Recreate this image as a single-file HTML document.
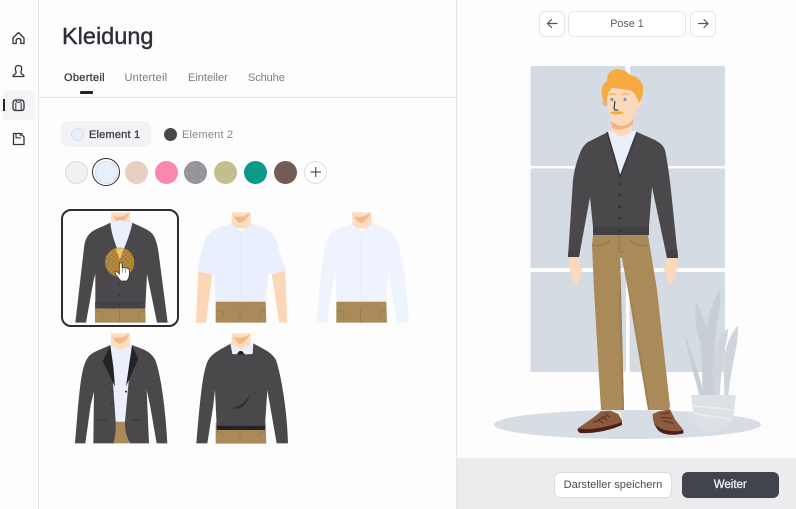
<!DOCTYPE html>
<html lang="de"><head><meta charset="utf-8"><title>Kleidung</title>
<style>
html,body{margin:0;padding:0;width:796px;height:509px;overflow:hidden;background:#fdfdfe;font-family:"Liberation Sans",sans-serif}
body{filter:blur(.3px)}
.a{position:absolute;white-space:nowrap}
.sw{position:absolute;width:23px;height:23px;border-radius:50%;top:160.5px;box-sizing:border-box}
.btn{position:absolute;box-sizing:border-box;border:1.5px solid #e6e7ea;border-radius:6px;background:#fff;text-align:center;color:#5b5c62;font-size:10.8px;line-height:25px}
.tab{position:absolute;top:71px;font-size:11px;line-height:14px;color:#797a80;letter-spacing:.2px;white-space:nowrap}
svg{position:absolute;left:0;top:0}
</style></head><body>
<div class="a" style="left:38px;top:0;width:1px;height:509px;background:#e6e6e9"></div>
<div class="a" style="left:456px;top:0;width:1px;height:509px;background:#e6e6e9"></div>
<div class="a" style="left:39px;top:97px;width:417px;height:1px;background:#e6e6e9"></div>
<div class="a" style="left:3px;top:91px;width:32px;height:29px;border-radius:4px;background:#f4f4f6"></div>
<div class="a" style="left:3px;top:99px;width:2px;height:12px;background:#26272c"></div>
<div class="a" style="left:62px;top:20.5px;font-size:23.5px;line-height:30px;color:#2c2e35;-webkit-text-stroke:.4px #2c2e35">Kleidung</div>
<div class="tab" style="left:64px;color:#3a3b41;-webkit-text-stroke:.3px #3a3b41;letter-spacing:.3px">Oberteil</div>
<div class="tab" style="left:124.5px">Unterteil</div>
<div class="tab" style="left:188px;letter-spacing:0">Einteiler</div>
<div class="tab" style="left:248px;letter-spacing:-.1px">Schuhe</div>
<div class="a" style="left:80px;top:91px;width:13px;height:2.5px;border-radius:1px;background:#23242a"></div>
<div class="a" style="left:61px;top:121px;width:90px;height:26px;border-radius:7px;background:#f3f3f6"></div>
<div class="a" style="left:70.5px;top:127.5px;width:13px;height:13px;border-radius:50%;background:#e8effc;border:1px solid #d8dce6;box-sizing:border-box"></div>
<div class="a" style="left:89px;top:127.5px;font-size:11px;line-height:14px;color:#3e3f45;-webkit-text-stroke:.35px #3e3f45;letter-spacing:.2px">Element 1</div>
<div class="a" style="left:163.5px;top:127.5px;width:13px;height:13px;border-radius:50%;background:#49474b"></div>
<div class="a" style="left:182px;top:127.5px;font-size:11px;line-height:14px;color:#85868c;letter-spacing:.2px">Element 2</div>
<div class="sw" style="left:64.5px;background:#f1f1f3;border:1px solid #dcdcdf"></div>
<div class="a" style="left:92px;top:158px;width:28px;height:28px;border-radius:50%;border:1.5px solid #2c2d31;box-sizing:border-box;background:#fff"></div>
<div class="sw" style="left:94.5px;background:#e8effc;border:1px solid #d6dbe6"></div>
<div class="sw" style="left:124.5px;background:#e6cfc2"></div>
<div class="sw" style="left:154.5px;background:#fb87b0"></div>
<div class="sw" style="left:184px;background:#94949c"></div>
<div class="sw" style="left:214px;background:#c4bf8f"></div>
<div class="sw" style="left:244px;background:#0a9a8c"></div>
<div class="sw" style="left:274px;background:#745b58"></div>
<div class="sw" style="left:304px;background:#fff;border:1px solid #dcdde0"></div>
<div class="a" style="left:61px;top:209px;width:118px;height:118px;border:2px solid #2d2e33;border-radius:10px;box-sizing:border-box"></div>
<div class="a" style="left:457px;top:458px;width:339px;height:51px;background:#ececee"></div>
<div class="btn" style="left:539px;top:11px;width:26px;height:25.5px"></div>
<div class="btn" style="left:568px;top:11px;width:118px;height:25.5px">Pose 1</div>
<div class="btn" style="left:690px;top:11px;width:26px;height:25.5px"></div>
<div class="btn" style="left:554px;top:472px;width:118px;height:26px;border-color:#dcdcdf;color:#4a4b51;font-size:11.1px;line-height:24px">Darsteller speichern</div>
<div class="btn" style="left:681.5px;top:472px;width:97.5px;height:26px;border:0;background:#42444d;color:#f4f4f6;font-size:11.5px;line-height:26.5px;-webkit-text-stroke:.3px #f4f4f6">Weiter</div>

<svg width="796" height="509" viewBox="0 0 796 509" xmlns="http://www.w3.org/2000/svg">
<defs>
<pattern id="dots" width="14" height="14" patternUnits="userSpaceOnUse"><circle cx="3" cy="3" r="2" fill="#f5a623"/><circle cx="10" cy="10" r="2" fill="#f5a623"/></pattern>
<pattern id="d2" width="7" height="7" patternUnits="userSpaceOnUse"><circle cx="2" cy="2" r=".6" fill="#e2617f"/><circle cx="5" cy="5" r=".5" fill="#e9d36a"/></pattern>
<pattern id="d3" width="8" height="7" patternUnits="userSpaceOnUse"><circle cx="2" cy="2" r=".5" fill="#8c8a5c"/></pattern>
<pattern id="d4" width="5" height="5" patternUnits="userSpaceOnUse"><circle cx="1" cy="1" r=".4" fill="#f3e4da"/></pattern>
<g id="pants"><path d="M135,305H285L287,368H135Z" fill="#a98a58"/><path d="M208,325V368M138,332C160,335 165,340 150,355M285,332C262,335 258,342 272,355" fill="none" stroke="#8b7146" stroke-width="1.5"/></g>
<g id="neck"><path d="M183,37H240V85H183Z" fill="#fddcc0"/><path d="M190,48C206,54 223,50 238,38C232,56 218,66 208,69C199,65 193,58 190,48Z" fill="#f4b98a"/></g>
</defs>
<!-- nav icons -->
<g fill="none" stroke="#33343a" stroke-width="1.3" stroke-linejoin="round" stroke-linecap="round">
<path d="M13,38L18.500,32.500L24,38V43.500H20.800V40.200C20.800,38 16.200,38 16.200,40.200V43.500H13Z"/>
<path d="M18.500,65.500C15.500,65.500 15,68 15.500,70C16,71.500 16.500,72.500 15.800,73.500C15,74.500 13,74.500 13,76.500H24C24,74.500 22,74.500 21.200,73.500C20.500,72.500 21,71.500 21.500,70C22,68 21.500,65.500 18.500,65.500Z"/>
<path d="M15.500,100H21.500C23.500,100 24,102 24,104V108C24,110 22.500,110.500 21.500,110.500H15.500C14.500,110.500 13,110 13,108V104C13,102 13.500,100 15.500,100Z"/>
<path d="M16,100.500C16,103 21,103 21,100.500M15.800,103V110M21.200,103V110" stroke-width="1"/>
<path d="M13.500,133.500H20.500L24,137V144.500H13.500Z"/>
<path d="M16,133.800V137.800H20.500M20,135.500L22,133.500" stroke-width="1.100"/>
</g>
<!-- arrows / plus -->
<g fill="none" stroke="#55565c" stroke-width="1.200" stroke-linecap="round" stroke-linejoin="round">
<path d="M557,23.500H547.500M551.500,19.500L547.500,23.500L551.500,27.500"/>
<path d="M698.500,23.500H708M704,19.500L708,23.500L704,27.500"/>
<path d="M311,172H320.500M315.700,167.500V176.500"/>
</g>
<circle cx="195.500" cy="172" r="11.500" fill="url(#d2)"/>
<circle cx="225.500" cy="172" r="11.500" fill="url(#d3)"/>
<circle cx="136" cy="172" r="11.500" fill="url(#d4)"/>

<!-- thumbnails (3x coordinates) -->
<g transform="translate(50 200) scale(.33333)">
 <!-- 1 cardigan -->
 <use href="#neck"/>
 <use href="#pants"/>
 <path d="M179,68L212,60L248,68L250,110L212,175L190,120Z" fill="#e9effc"/>
 <path d="M181,68C160,80 140,85 126,95C112,105 106,120 103,135L76,368H108L131,240L136,222L136,325H286L291,222L321,368H353L326,160C322,130 315,110 306,100C290,85 265,78 247,68C240,110 222,140 212,175C200,140 185,110 181,68Z" fill="#4a484b"/>
 <path d="M136,305H284V325H136Z" fill="#444347"/>
 <g fill="#2e2d30"><circle cx="207" cy="250" r="2.500"/><circle cx="207" cy="285" r="2.500"/><circle cx="207" cy="315" r="2.500"/></g>
 <circle cx="209" cy="187" r="44" fill="#a5803c"/>
 <path d="M197,145L222,145L209,178Z" fill="#e8cb80"/>
 <circle cx="209" cy="187" r="44" fill="url(#dots)"/>
 <path d="M208,192V222L202,216C197,212 193,218 197,223L212,243H230C238,235 240,225 238,208C232,203 222,203 217,204L216,192C215,187 208,187 208,192Z" fill="#fff" stroke="#343436" stroke-width="2.500"/>
 <path d="M217,206V218M226,206V218" stroke="#343436" stroke-width="1.500"/>
 <!-- 2 short shirt -->
 <use href="#neck" x="362"/>
 <use href="#pants" x="362"/>
 <path d="M445,215L438,368H468L487,222ZM665,222L688,368H711L706,212Z" fill="#fdd6b8"/>
 <path d="M543,70L574,95L607,70C640,80 665,90 678,120C692,160 700,190 708,212L655,222L646,305H497L492,222L442,215C448,180 455,150 465,120C475,90 510,80 543,70Z" fill="#e9effc"/>
 <path d="M543,70L574,97L607,70M571,100V305" fill="none" stroke="#d3d9e6" stroke-width="1.500" stroke-dasharray="2 2"/>
 <!-- 3 long shirt -->
 <use href="#neck" x="724"/>
 <use href="#pants" x="724"/>
 <path d="M905,70L936,95L969,70C1000,80 1025,90 1040,120C1060,170 1072,280 1077,368H1040L1015,210L1008,305H860L855,210L830,368H801C806,280 815,180 830,120C842,90 875,80 905,70Z" fill="#eef3fe"/>
 <path d="M905,70L936,97L969,70M933,100V305" fill="none" stroke="#d8deea" stroke-width="1.500" stroke-dasharray="2 2"/>
 <!-- 4 blazer -->
 <use href="#neck" y="363"/>
 <path d="M195,665H225L238,730H182Z" fill="#a98a58"/>
 <path d="M181,435L213,450L246,435V665H197Z" fill="#e9effc"/>
 <path d="M181,435C150,450 125,455 112,475C95,500 90,560 84,620L75,730H106L122,615L132,575L130,730H190C197,710 197,690 197,665L181,435ZM246,435C270,445 300,450 316,480C335,530 348,650 352,730H320L300,615L290,570L297,730H240C226,700 225,690 225,665Z" fill="#4a484b"/>
 <path d="M181,437L158,483L195,560L190,500ZM246,437L265,475L228,560L238,490Z" fill="#232225"/>
 <g fill="#2e2d30"><circle cx="186" cy="575" r="3"/><circle cx="186" cy="610" r="3"/><circle cx="228" cy="575" r="3"/></g>
 <path d="M142,660H172M245,660H275" stroke="#303033" stroke-width="2"/>
 <!-- 5 sweater -->
 <use href="#neck" x="362" y="363"/>
 <use href="#pants" x="362" y="363"/>
 <path d="M543,430C520,445 490,455 475,480C458,510 450,600 439,730H472L490,615L495,570L500,677H645L652,570L680,730H714C712,640 695,530 678,480C665,455 635,445 610,430L575,460Z" fill="#4a484b"/>
 <path d="M500,677H645V690H500Z" fill="#232225"/>
 <path d="M541,430L547,462L575,464L608,462L610,430L575,448Z" fill="#e9effc"/>
 <path d="M560,464H585L576,453H568Z" fill="#1f1e20"/>
 <path d="M545,625C570,620 590,605 600,580C595,610 575,630 545,625Z" fill="#2e2d30"/>
</g>

<!-- window -->
<g fill="#d4dbe3">
<rect x="530.500" y="66" width="95" height="100" rx="2"/>
<rect x="630" y="66" width="95" height="100" rx="2"/>
<rect x="530.500" y="168.500" width="194.500" height="99.500" rx="2"/>
<rect x="530.500" y="272" width="95.500" height="100" rx="2"/>
<rect x="629.500" y="272" width="95.500" height="100" rx="2"/>
</g>
<ellipse cx="627.500" cy="424.500" rx="133.500" ry="14.500" fill="#d7dde4"/>

<!-- plant -->
<g transform="translate(675 285) scale(.33333)">
<g fill="#c8ced6">
<path d="M30,145C45,200 75,260 85,330H72C60,270 35,210 30,145Z"/>
<path d="M65,50C55,90 62,130 75,175C85,220 80,280 82,330H105C110,260 105,200 100,150C90,110 75,80 65,50Z"/>
<path d="M135,10C110,60 95,100 97,145C105,200 105,260 100,330H118C118,260 115,190 125,120C135,80 138,40 135,10Z"/>
<path d="M158,130C135,150 120,180 115,220C108,260 115,300 118,330H135C135,280 145,230 150,190C155,165 160,150 158,130Z" fill="#d0d5db"/>
<path d="M188,122C165,150 150,185 148,230C145,270 148,300 148,330H160C165,280 175,230 185,180C188,160 190,140 188,122Z" fill="#d0d5db"/>
</g>
<path d="M48,330H182L178,380C172,420 150,440 110,440C80,440 60,425 55,385Z" fill="#dde1e6"/>
<path d="M50,360C90,370 140,365 180,380M55,385C90,392 130,395 172,405" stroke="#eceef1" stroke-width="4" fill="none"/>
</g>

<!-- figure -->
<path d="M570,257H579L580,265L583,272L580,271L578,286C574,284 571,278 570,270ZM677,257H667L666,265L663,272L666,271L668,285C672,283 676,277 677,270Z" fill="#fcd9bb"/>
<path d="M593,235H648L657,290L670,406L669,410H648L628,290L622,258L620,258L621,290L624,410H601L594,290L592,245Z" fill="#a98a58"/>
<path d="M620,258L621,290L624,410H622L619,300ZM622,258L628,290L648,409L650,409L631,300Z" fill="#9d8251"/>
<path d="M592,245C600,246 607,245 610,240M648,245C640,246 634,245 630,240M619,235V250C620,253 622,253 624,251" fill="none" stroke="#8b7146" stroke-width=".8"/>
<path d="M609,413L620,411L622,418L610,418ZM654,411L664,410L666,414L656,416Z" fill="#f7ecd9"/>
<g transform="translate(560 390) scale(.33333)">
<path d="M53,116C70,102 100,85 122,64L150,62L175,72L186,92V105C150,118 100,125 60,126Z" fill="#8c5a3c"/>
<path d="M53,116C90,122 150,110 186,96V105C150,122 95,132 60,129C54,126 52,120 53,116Z" fill="#4a1f1a"/>
<path d="M278,72L295,64L330,58L345,88L370,120V130C340,136 308,132 292,116C282,106 278,90 278,72Z" fill="#8c5a3c"/>
<path d="M282,100C300,122 340,128 370,121V130C340,138 305,135 292,118Z" fill="#4a1f1a"/>
<path d="M100,98L140,78M115,90L130,100M125,80L142,90M135,70L150,82M300,72L330,68M302,82L335,85M310,92L340,100" stroke="#4a2a1e" stroke-width="2.500" fill="none"/>
</g>
<!-- neck, collar, cardigan -->
<path d="M611,115H632V136L621,145L611,136Z" fill="#fcd9bb"/>
<path d="M611,121C617,126 626,125 633,119V124C626,130 618,131 612,128Z" fill="#f2b184"/>
<path d="M609,130L621,137L636,130L637,140L621,177L607,136Z" fill="#e9effc"/>
<path d="M608,132L588,142C584,145 582,148 580,153C576,163 574,172 573,180L568,257H579L590,197L593,227V235H649V227L652,187L667,258H678L672,200C670,180 668,165 665,150C663,145 660,143 655,140L637,132L620,177C617,160 612,148 608,132Z" fill="#4a484b"/>
<path d="M607,132L620,177L637,132" fill="none" stroke="#39383c" stroke-width="1.500"/>
<path d="M593,227H649V235H593ZM568.500,250H580L579,257H568ZM666,250H677.500L678,258H667Z" fill="#424145"/>
<g fill="#2b2a2d"><circle cx="619.500" cy="184" r="1.200"/><circle cx="619.500" cy="195" r="1.200"/><circle cx="619.500" cy="207" r="1.200"/><circle cx="619.500" cy="218" r="1.200"/><circle cx="619.500" cy="231" r="1.200"/></g>
<!-- head -->
<circle cx="605.500" cy="103" r="3" fill="#f0ac7c"/><circle cx="639" cy="104" r="2.700" fill="#fcd9bb"/>
<path d="M607,90L636,88C638,95 638,105 637,110C636,118 630,125 622,126C615,126 610,120 609,113C607,105 606,98 607,90Z" fill="#fcd9bb"/>
<path d="M610,72C615,67 625,69 630,75C638,76 644,83 643,91C643,96 641,100 639,103L636,96C634,92 631,90 628,90C622,89 616,88 612,88C608,91 607,97 606,103L603,99C600,91 602,84 607,81C607,77 608,74 610,72Z" fill="#f7aa40"/>
<path d="M609,95C611,93.500 614,93.500 616,95M622,95C624,93.500 627,93.500 629,95" stroke="#f5a83f" stroke-width="1" fill="none"/>
<circle cx="612" cy="99.500" r="1.600" fill="#6d98c4"/><circle cx="625" cy="99.500" r="1.600" fill="#6d98c4"/>
<path d="M615,101L614,108C614,110 616,110.500 618,110" stroke="#1d1d1f" stroke-width="1" fill="none"/>
<path d="M610,113C613,110.500 616,111 617,112C619,110.500 622,111 624,113C620,115 614,115 610,113Z" fill="#f5a83f"/>
</svg>
</body></html>
